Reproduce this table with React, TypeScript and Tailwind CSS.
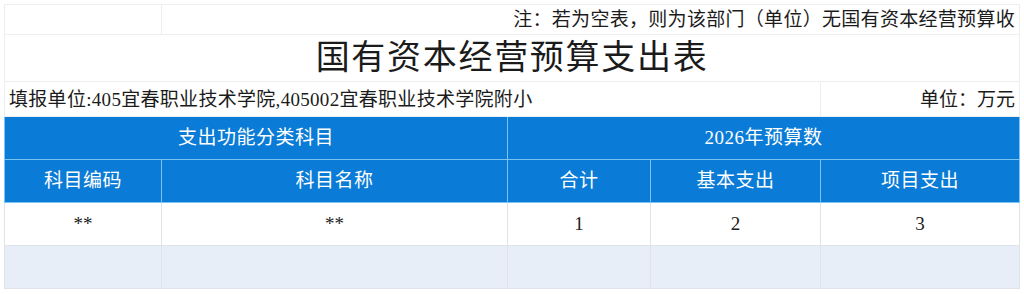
import React from 'react';

const FONT = "font-['Liberation_Serif','Noto_Sans_CJK_SC',serif]";

const columns = [157, 346, 143, 170, 199];

export default function App() {
  return (
    <div className={`h-[294px] w-[1024px] bg-white p-1 text-[#1b1b1b] ${FONT}`}>
      <table className="w-[1015px] table-fixed border-collapse">
        <colgroup>
          {columns.map((width, index) => (
            <col key={index} style={{ width }} />
          ))}
        </colgroup>
        <tbody>
          <tr className="h-[30px]">
            <td className="border border-[#eceef1]" />
            <td colSpan={4} className="border border-[#eceef1] pr-[4px] text-right text-[19px] leading-none tracking-[0.3px]">
              注：若为空表，则为该部门（单位）无国有资本经营预算收
            </td>
          </tr>
          <tr className="h-[47px]">
            <td colSpan={5} className="border border-[#eceef1] text-center text-[34px] leading-none tracking-[1.7px]">
              国有资本经营预算支出表
            </td>
          </tr>
          <tr className="h-[35px]">
            <td colSpan={4} className="border border-[#eceef1] pl-[4px] text-left text-[19px] leading-none tracking-[0.3px] whitespace-nowrap">
              填报单位:405宜春职业技术学院,405002宜春职业技术学院附小
            </td>
            <td className="border border-[#eceef1] pr-[4px] text-right text-[19px] leading-none">
              单位：万元
            </td>
          </tr>
          <tr className="h-[43px] bg-[#0a7bd6] text-white">
            <th colSpan={2} className="border border-[#7cc3f2] text-[19px] font-normal tracking-[0.5px]">
              支出功能分类科目
            </th>
            <th colSpan={3} className="border border-[#7cc3f2] text-[19px] font-normal tracking-[0.5px]">
              2026年预算数
            </th>
          </tr>
          <tr className="h-[43px] bg-[#0a7bd6] text-white">
            {['科目编码', '科目名称', '合计', '基本支出', '项目支出'].map((label) => (
              <th key={label} className="border border-[#7cc3f2] text-[19px] font-normal tracking-[0.5px]">
                {label}
              </th>
            ))}
          </tr>
          <tr className="h-[43px] bg-white">
            {['**', '**', '1', '2', '3'].map((value, index) => (
              <td key={index} className="border border-[#dfe4ea] text-center text-[19px]">
                {value}
              </td>
            ))}
          </tr>
          <tr className="h-[43px] bg-[#e8eef8]">
            {columns.map((_, index) => (
              <td key={index} className="border border-[#dfe4ea]" />
            ))}
          </tr>
        </tbody>
      </table>
    </div>
  );
}
